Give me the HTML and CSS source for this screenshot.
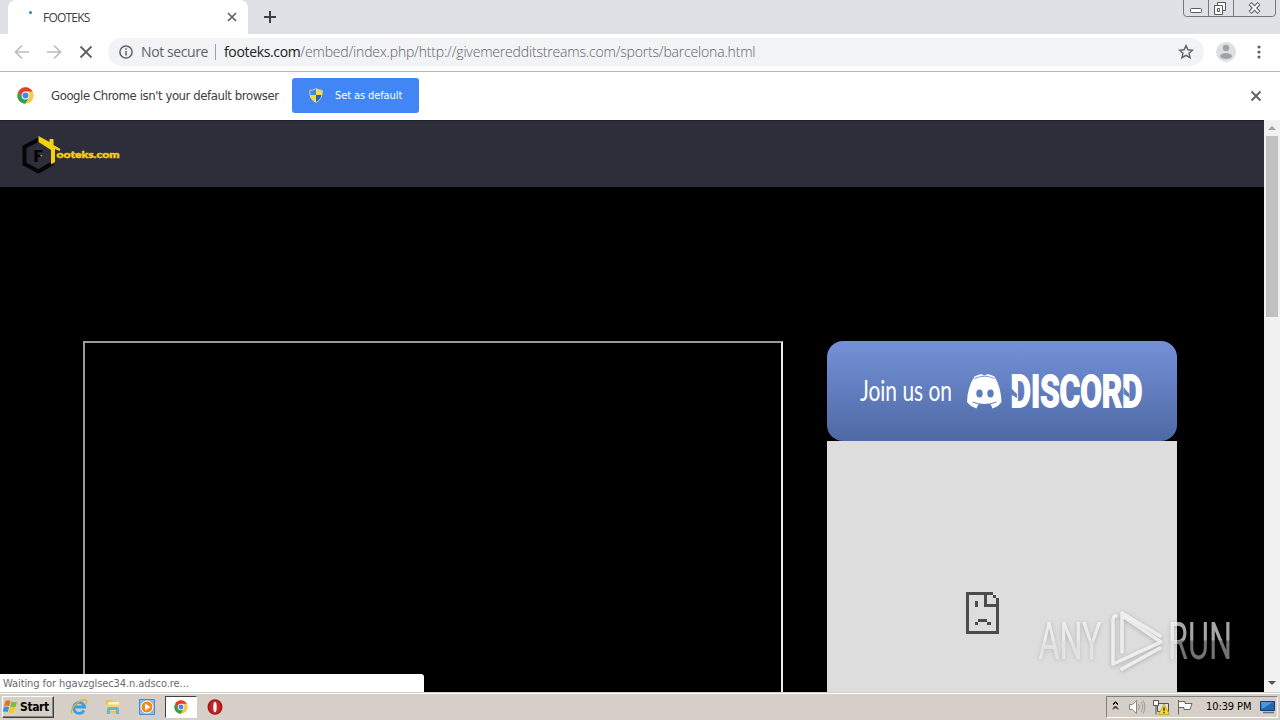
FILE: index.html
```html
<!DOCTYPE html>
<html lang="en">
  <head>
    <meta charset="UTF-8" />
    <meta name="viewport" content="width=device-width, initial-scale=1.0" />
    <title>FOOTEKS</title>
    <link rel="stylesheet" href="styles.css">
  </head>
  <body>
    <!-- shared icons -->
    <svg class="defs" width="0" height="0">
      <symbol id="chrome" viewBox="0 0 48 48">
        <circle cx="24" cy="24" r="23" fill="#fbc941"/>
        <path d="M4.100 12.500A23 23 0 0 0 23 47L34 29.500 24 24 14 29.500z" fill="#2da14c"/>
        <path d="M4.100 12.500A23 23 0 0 1 43.900 12.500H24L14 29.500z" fill="#e33b2e"/>
        <circle cx="24" cy="24" r="11" fill="#fff"/>
        <circle cx="24" cy="24" r="8.500" fill="#4285f4"/>
      </symbol>
    </svg>
    <!-- tabs -->
    <header class="tabs">
      <div class="tab">
        <i class="spinner"></i>
        <span class="tab-title">FOOTEKS</span>
        <svg class="tab-close" width="10" height="10" viewBox="0 0 10 10"><path d="M1 1l8 8M9 1L1 9" stroke="#5f6368" stroke-width="1.700"/></svg>
      </div>
      <svg class="plus" width="14" height="14" viewBox="0 0 14 14"><path d="M7 1v12M1 7h12" stroke="#3c4043" stroke-width="2"/></svg>
      <div class="win-buttons">
        <svg width="93" height="17" viewBox="0 0 93 17">
          <path d="M.5 0v13q0 3.500 3 3.500h86q3 0 3-3.500V0M25.500 0v16M50.500 0v16" fill="none" stroke="#74777d"/>
          <rect x="7.500" y="8.500" width="11" height="4" rx="1" fill="#fff" stroke="#555960"/>
          <path d="M34.500 2.500h8v8h-8z" fill="#fff" stroke="#555960"/>
          <path d="M31.500 5.500h8v9h-8z" fill="#fff" stroke="#555960"/>
          <path d="M34.500 8.500h2v3h-2z" fill="none" stroke="#555960"/>
          <path d="M67 3.500l9 9M76 3.500l-9 9" stroke="#555960" stroke-width="4"/>
          <path d="M67.500 4l8 8M75.500 4l-8 8" stroke="#fff" stroke-width="2"/>
        </svg>
      </div>
    </header>
    <!-- toolbar -->
    <nav class="toolbar">
      <svg width="108" height="36" viewBox="0 0 108 36" fill="none">
        <path d="M29 18H16M22 11.500L15.500 18l6.500 6.500M47 18h13M54 11.500l6.500 6.500-6.500 6.500" stroke="#babcbe" stroke-width="1.700"/>
        <path d="M80.500 12.500l11 11M91.500 12.500l-11 11" stroke="#5f6368" stroke-width="1.900"/>
      </svg>
      <div class="omnibox">
        <svg class="info" width="14" height="14" viewBox="0 0 14 14"><circle cx="7" cy="7" r="6.100" fill="none" stroke="#5f6368" stroke-width="1.500"/><path d="M7 6v4.500M7 3.300v1.500" stroke="#5f6368" stroke-width="1.500"/></svg>
        <span class="not-secure">Not secure</span>
        <i class="sep"></i>
        <span class="url"><b>footeks.com</b>/embed/index.php/http://givemeredditstreams.com/sports/barcelona.html</span>
        <svg class="star" width="16" height="16" viewBox="0 0 16 16"><path d="M8 1.600l1.900 4.200 4.600.4-3.500 3 1.100 4.500L8 11.300l-4.100 2.400L5 9.200l-3.500-3 4.600-.4z" fill="none" stroke="#5f6368" stroke-width="1.400"/></svg>
      </div>
      <svg class="user" width="20" height="20" viewBox="0 0 20 20"><circle cx="10" cy="10" r="10" fill="#dedfe1"/><circle cx="10" cy="6" r="3.200" fill="#a0a2a5"/><ellipse cx="10" cy="14" rx="6" ry="3" fill="#a0a2a5"/></svg>
      <svg class="dots" width="4" height="14" viewBox="0 0 4 14" fill="#5f6368"><circle cx="2" cy="2" r="1.600"/><circle cx="2" cy="7" r="1.600"/><circle cx="2" cy="12" r="1.600"/></svg>
    </nav>
    <!-- default browser bar -->
    <div class="infobar">
      <svg class="chrome-logo" width="17" height="17"><use href="#chrome"/></svg>
      <span class="info-text">Google Chrome isn't your default browser</span>
      <div class="set-default">
        <svg width="14" height="15" viewBox="0 0 14 15">
          <path d="M7 .5Q4 2.500.8 2.300 0 11 7 14.500z" fill="#3f8be0"/>
          <path d="M7 .5q3 2 6.200 1.800Q14 11 7 14.500z" fill="#ffd83a"/>
          <path d="M.7 7H7v7.500Q1.500 12 .7 7z" fill="#ffd83a"/>
          <path d="M13.300 7H7v7.500Q12.500 12 13.300 7z" fill="#2467b8"/>
          <path d="M7 .6Q4 2.500.8 2.300 0 11 7 14.400 14 11 13.200 2.300 10 2.500 7 .6z" fill="none" stroke="#d9d6b4" stroke-width=".9"/>
        </svg>
        <span>Set as default</span>
      </div>
      <svg class="info-close" width="12" height="12" viewBox="0 0 12 12"><path d="M1.500 1.500l9 9M10.500 1.500l-9 9" stroke="#5f6368" stroke-width="1.900"/></svg>
    </div>
    <!-- page -->
    <main class="view">
      <div class="site">
        <div class="site-header">
          <svg width="110" height="40" viewBox="0 0 110 40">
            <path d="M30 12.500L16.500 4.500 2.500 12v17l14 7.500L31 28" fill="none" stroke="#050505" stroke-width="4"/>
            <text class="logo-f" x="11" y="26.500">F</text>
            <path d="M18 19.500l3 1-2 1.500z" fill="#a89a20"/>
            <path d="M16.500 1l11 6V4h4v6l7 4-1 2-4.500-2v13l-4 2.500V15L16.500 7z" fill="#f5cf10"/>
            <text class="logo-text" x="34.500" y="23" textLength="63" lengthAdjust="spacingAndGlyphs">ooteks.com</text>
          </svg>
        </div>
        <div class="content">
          <div class="player"></div>
          <aside class="side">
            <div class="discord">
              <svg width="350" height="100" viewBox="0 0 350 100" fill="#fff">
                <text class="join" x="33" y="59.500" textLength="92" lengthAdjust="spacingAndGlyphs">Join us on</text>
                <path d="M147.500 35.500Q152 33 155 33l.8 1.300h3.400L160 33q3 0 7.500 2.500Q174 46 174.500 61q-3 4.500-9 6.500l-2-4.500h-12l-2 4.500q-6-2-9.500-6.500.5-15 7.500-25.500z"/>
                <path d="M147.500 37.500q10-4.500 20 0" fill="none" stroke="#6280c6" stroke-width=".8"/>
                <path d="M145.500 61q12 5 24 0" fill="none" stroke="#5c7abd" stroke-width="1"/>
                <ellipse cx="152.500" cy="52.500" rx="3.200" ry="4" fill="#5d7bc0"/>
                <ellipse cx="163.500" cy="52.500" rx="3.200" ry="4" fill="#5d7bc0"/>
                <text class="wordmark" x="183.500" y="65.500" textLength="132" lengthAdjust="spacingAndGlyphs">DISCORD</text>
                <!-- notches in both D stems -->
                <path d="M183 46l7 7v4l-7-4zM296.500 46l6 7v4l-6-4z" fill="#617fc4"/>
              </svg>
            </div>
            <div class="dead-frame">
              <svg width="34" height="42" viewBox="0 0 34 42" fill="#4b4b4b" shape-rendering="crispEdges">
                <path d="M0 0h27v3H3v36h27V15H18V3h3v9h9V9h3v33H0z"/>
                <path d="M27 3h3v3h-3zM30 6h3v3h-3zM9 9h3v6H9zM12 27h9v3h-9zM9 30h3v3H9zM21 30h4v3h-4z"/>
              </svg>
            </div>
          </aside>
        </div>
      </div>
      <div class="scrollbar">
        <i class="up"></i>
        <div class="thumb"></div>
        <i class="down"></i>
      </div>
      <div class="status">Waiting for hgavzglsec34.n.adsco.re...</div>
      <!-- watermark -->
      <svg class="anyrun" width="200" height="70" viewBox="0 0 200 70">
        <defs>
          <linearGradient id="fade" gradientUnits="userSpaceOnUse" x1="0" y1="15" x2="0" y2="52">
            <stop offset=".48" stop-color="#fff" stop-opacity=".65"/>
            <stop offset=".52" stop-color="#fff" stop-opacity=".45"/>
          </linearGradient>
        </defs>
        <g class="anyrun-text" fill="url(#fade)">
          <text x="3.500" y="52" textLength="63" lengthAdjust="spacingAndGlyphs">ANY</text>
          <text x="133" y="52" textLength="64" lengthAdjust="spacingAndGlyphs">RUN</text>
        </g>
        <g fill="none" stroke="#fff" stroke-opacity=".7" stroke-width="3.500" stroke-linejoin="round" stroke-linecap="round">
          <path d="M87 45V6l38 23"/>
          <path d="M89 10l37 25-48 22V13q0-4 3-4"/>
          <path d="M87 62l38-21"/>
        </g>
      </svg>
    </main>
    <!-- taskbar -->
    <footer class="taskbar">
      <div class="start">
        <svg width="15" height="15" viewBox="0 0 15 15"><path d="M2.500 2Q5 .5 7.500 2L6.200 7Q3.500 6 1 7.200z" fill="#ee6b24"/><path d="M8.500 2.500Q11 4 14 2.500L12.800 7.500Q10 9 7.200 7.500z" fill="#7fba3c"/><path d="M.8 8.200Q3.500 7 6 8.200L4.800 13Q2 12-.5 13z" fill="#3d92dc"/><path d="M7 8.500Q9.500 10 12.400 8.600L11 13.500q-3 1.500-5.300 0z" fill="#fbc926"/></svg>
        <span>Start</span>
      </div>
      <div class="quick">
        <div class="app">
          <svg width="18" height="18" viewBox="0 0 18 18" fill="none"><path d="M14 12.500A5.500 5.500 0 1 1 14.600 9H5" stroke="#35a2e6" stroke-width="2.800"/><path d="M2 15.500Q-.5 12 6 6T16.500 2.500q.8 1-.8 3.500" stroke="#e3b433" stroke-width="1.300"/></svg>
        </div>
        <div class="app">
          <svg width="16" height="16" viewBox="0 0 16 16"><path d="M1 1h6l1 1.500h6V14H1z" fill="#e5c35a"/><path d="M3 3h11v5H3z" fill="#fff4bd"/><path d="M.5 5.500h14V12H.5z" fill="#f0d67a"/><path d="M2 10q0-2 2-2h8q2 0 2 2v5h-3v-4H5v4H2z" fill="#65b5df"/></svg>
        </div>
        <div class="app">
          <svg width="16" height="16" viewBox="0 0 16 16"><path d="M.5.500h15v15H.5z" fill="#8ebbe6" stroke="#4a8ac9"/><circle cx="8" cy="8" r="6" fill="#f28a18" stroke="#fff"/><path d="M6 4.500L11.500 8 6 11.500z" fill="#fff"/></svg>
        </div>
        <div class="app active">
          <svg width="14" height="14"><use href="#chrome"/></svg>
        </div>
        <div class="app">
          <svg width="16" height="16" viewBox="0 0 16 16"><ellipse cx="8" cy="8" rx="7.500" ry="7.800" fill="#a51616"/><ellipse cx="8" cy="8" rx="5.800" ry="6.600" fill="#c72323"/><ellipse cx="8" cy="8" rx="1.700" ry="5.300" fill="#fff"/></svg>
        </div>
      </div>
      <div class="tray">
        <svg width="92" height="20" viewBox="0 0 92 20" fill="none">
          <path d="M6 8l2.500-2.500L11 8M6 12.500L8.500 10l2.500 2.500M6 7l2.500-2.500L11 7M6 11.500L8.500 9l2.500 2.500" stroke="#111"/>
          <path d="M22.500 7.500h3l4-4v13l-4-4h-3z" fill="#fff" stroke="#888"/>
          <path d="M31.500 7q2 3 0 6M34 5q3.500 5 0 10M36 3.500q4 6.500 0 13" stroke="#999"/>
          <path d="M50.500 6.500h11v8h-11z" fill="#dfe3e8" stroke="#555"/>
          <path d="M46.500 3.500h5v5h-5zM49 8.500v9" fill="#fff" stroke="#555"/>
          <path d="M57 7l5.500 10.500h-11z" fill="#ffd91e" stroke="#b69b10" stroke-width=".7"/>
          <path d="M57 10.500v3.500M57 15v1.200" stroke="#222" stroke-width="1.300"/>
          <path d="M71.500 3v14.500M72 4.500h6v2h7l-2 6h-6v-2h-5" fill="#fff" stroke="#666"/>
        </svg>
        <span class="clock">10:39 PM</span>
        <svg class="desk" width="16" height="14" viewBox="0 0 16 14"><path d="M.5 1.500h14v9H.5z" fill="#2265b5" stroke="#173e78"/><path d="M1 2h12L2 9z" fill="#4b97de"/><path d="M3 12.500h11" stroke="#66727e" stroke-width="1.500"/></svg>
      </div>
    </footer>
  </body>
</html>
```
FILE: styles.css
```css
* {
  margin: 0;
  padding: 0;
  box-sizing: border-box;
}
body {
  width: 1280px;
  height: 720px;
  overflow: hidden;
  display: flex;
  flex-direction: column;
  background: #000;
  font-family: "DejaVu Sans Condensed", "DejaVu Sans", sans-serif;
  white-space: nowrap;
}
svg {
  display: block;
  flex: none;
}
.defs {
  position: absolute;
}
/* tabs */
.tabs {
  height: 34px;
  flex: none;
  display: flex;
  background: #dee1e6;
}
.tab {
  width: 240px;
  height: 34px;
  margin-left: 8px;
  display: flex;
  align-items: center;
  background: #fff;
  border-radius: 8px 8px 0 0;
}
.spinner {
  width: 3px;
  height: 3px;
  margin: -10px 11px 0 21px;
  border-radius: 50%;
  background: #3b78d8;
}
.tab-title {
  width: 184px;
  font: 12px "Open Sans", sans-serif;
  letter-spacing: -0.8px;
  color: #3c4043;
}
.plus {
  margin: 10px 0 0 15px;
}
.win-buttons {
  margin-left: auto;
  margin-right: 4px;
}
/* toolbar */
.toolbar {
  height: 38px;
  flex: none;
  display: flex;
  align-items: center;
  padding-bottom: 1px;
  background: #fff;
  border-bottom: 1px solid #b6b7b9;
}
.omnibox {
  width: 1096px;
  height: 28px;
  display: flex;
  align-items: center;
  padding-bottom: 1px;
  background: #f1f3f4;
  border-radius: 14px;
  font: 300 14px "Open Sans", sans-serif;
  color: #5f6368;
}
.info {
  margin: 0 8px 0 11px;
}
.not-secure {
  width: 74px;
  font-weight: 400;
  letter-spacing: -0.4px;
}
.sep {
  width: 1px;
  height: 16px;
  margin-right: 8px;
  background: #9aa0a6;
}
.url {
  letter-spacing: -0.18px;
}
.url b {
  font-weight: 400;
  letter-spacing: -0.35px;
  color: #202124;
}
.star {
  margin-left: auto;
  margin-right: 10px;
}
.user {
  margin-left: 12px;
}
.dots {
  margin-left: 21px;
}
/* infobar */
.infobar {
  height: 48px;
  flex: none;
  display: flex;
  align-items: center;
  padding-bottom: 1px;
  background: #fff;
}
.chrome-logo {
  margin: 0 17px;
}
.info-text {
  width: 241px;
  font-size: 13px;
  letter-spacing: -0.42px;
  color: #3c4043;
}
.set-default {
  width: 127px;
  height: 35px;
  padding: 0 0 1px 17px;
  display: flex;
  align-items: center;
  gap: 12px;
  background: #4285f4;
  border-radius: 3px;
  font-size: 11px;
  letter-spacing: -0.1px;
  color: #fff;
}
.info-close {
  margin-left: auto;
  margin-right: 18px;
}
/* page */
.view {
  position: relative;
  height: 572px;
  flex: none;
  display: flex;
}
.site {
  width: 1264px;
  background: #000;
  overflow: hidden;
}
.site-header {
  height: 67px;
  padding: 14px 0 0 22px;
  background: #2d2e39;
  border-top: 1px solid #202129;
}
.logo-f {
  font: bold 16px "DejaVu Sans", sans-serif;
  fill: #050505;
}
.logo-text {
  font: 900 10px "Lato", sans-serif;
  fill: #f5cf10;
  stroke: #f5cf10;
  stroke-width: 0.5px;
}
.content {
  display: flex;
  align-items: flex-start;
  gap: 44px;
  padding: 154px 0 0 83px;
}
.player {
  width: 700px;
  height: 400px;
  border: 2px solid;
  border-color: #9a9a9a #eee #eee #9a9a9a;
}
.side {
  width: 350px;
}
.discord {
  height: 100px;
  border-radius: 16px;
  background: linear-gradient(#7491d8, #4e69a4);
}
.join {
  font: 29px "Lato", sans-serif;
}
.wordmark {
  font: bold 45px "Roboto", sans-serif;
  stroke: #fff;
  stroke-width: 1.8px;
}
.dead-frame {
  height: 343px;
  display: flex;
  align-items: center;
  justify-content: center;
  background: #ddd;
  padding-right: 38px;
}
.scrollbar {
  width: 16px;
  padding: 0 2px;
  display: flex;
  flex-direction: column;
  align-items: center;
  background: #f1f1f1;
}
.up,
.down {
  border: 4px solid transparent;
}
.up {
  margin-top: 6px;
  margin-bottom: 6px;
  border-top: 0;
  border-bottom-color: #a3a3a3;
}
.thumb {
  width: 12px;
  height: 181px;
  background: #c1c1c1;
}
.down {
  margin-top: auto;
  margin-bottom: 7px;
  border-bottom: 0;
  border-top-color: #505050;
}
/* link status over the page */
.status {
  position: absolute;
  left: 0;
  bottom: 0;
  width: 424px;
  height: 18px;
  padding-left: 3px;
  background: #fff;
  border-top-right-radius: 3px;
  font-size: 11px;
  letter-spacing: -0.08px;
  line-height: 19px;
  color: #686b6f;
}
.anyrun {
  position: absolute;
  left: 1035px;
  top: 487px;
  filter: drop-shadow(0 1px 2px rgba(0, 0, 0, 0.3));
}
.anyrun-text {
  font: 400 51px "Roboto", sans-serif;
}
/* taskbar */
.taskbar {
  height: 28px;
  flex: none;
  display: flex;
  align-items: center;
  padding: 1px 2px;
  background: #d6cfc7;
  border-top: 1px solid #d4d0c8;
  box-shadow: inset 0 1px #fff;
}
.start {
  width: 52px;
  height: 22px;
  display: flex;
  align-items: center;
  gap: 2px;
  border: 1px solid;
  border-color: #fff #404040 #404040 #fff;
  box-shadow: inset -1px -1px #88847e;
  font-size: 12px;
  font-weight: bold;
  letter-spacing: -0.4px;
}
.quick {
  display: flex;
  margin-left: 9px;
  gap: 2px;
}
.app {
  width: 32px;
  height: 22px;
  display: flex;
  align-items: center;
  justify-content: center;
}
.app.active {
  background: #fff;
  border: 1px solid;
  border-color: #404040 #fff #fff #404040;
}
.tray {
  width: 172px;
  height: 22px;
  margin-left: auto;
  display: flex;
  align-items: center;
  border: 1px solid;
  border-color: #808080 #fff #fff #808080;
}
.clock {
  width: 54px;
  margin-left: 7px;
  font-size: 11px;
  letter-spacing: -0.1px;
}
```
